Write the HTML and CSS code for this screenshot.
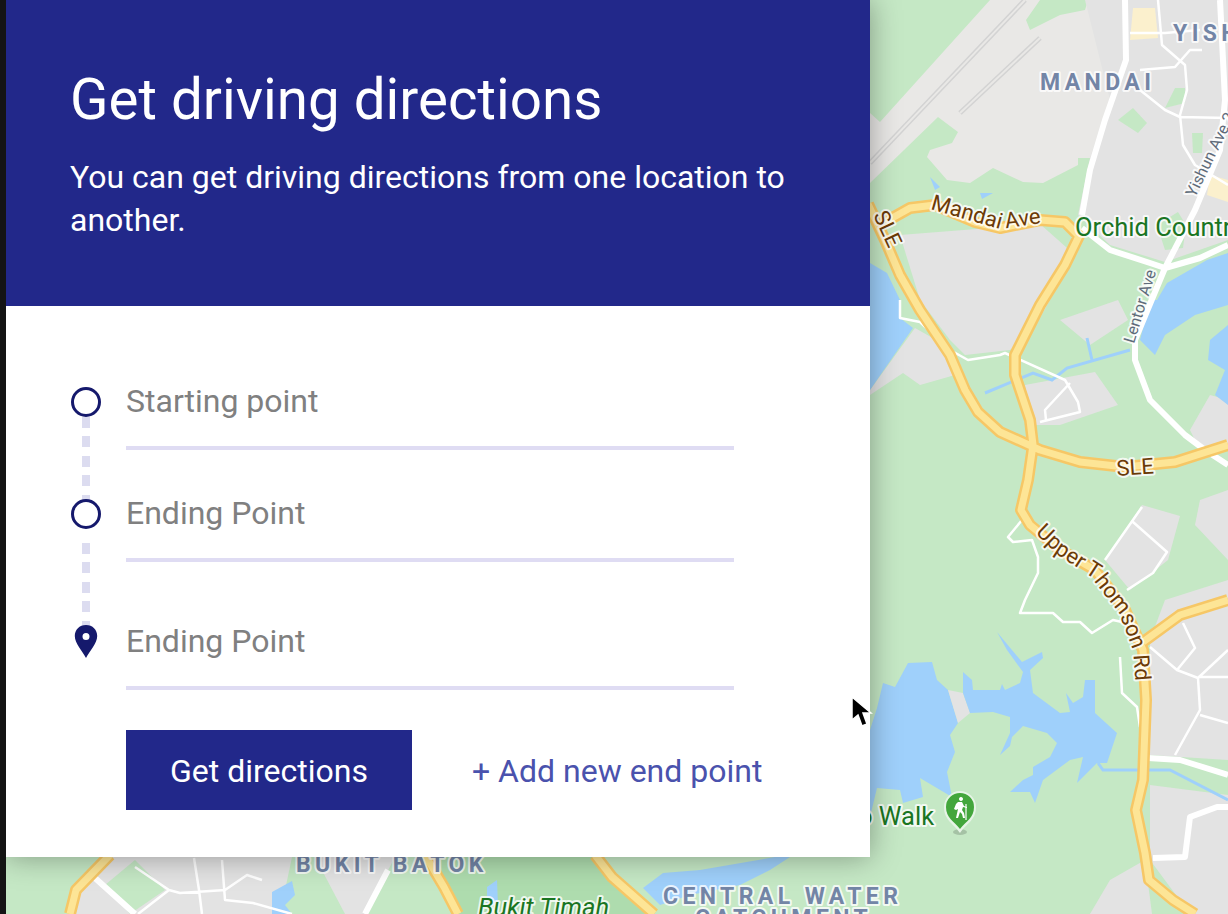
FILE: index.html
```html
<!DOCTYPE html>
<html lang="en">
<head>
<meta charset="utf-8">
<title>Get driving directions</title>
<link rel="stylesheet" href="styles.css">
</head>
<body>
<div class="stage">
  <div class="edge"></div>
  <div class="canvas">
    <svg class="map" viewBox="6 0 1222 914" width="1222" height="914" aria-hidden="true">
      <defs>
        <path id="major" d="M868 204L885 240L900 275L920 310L950 355L965 390L978 412L1000 432L1040 450L1080 462L1125 467L1175 462L1228 445M885 222L910 208L935 205L975 222L1000 228L1040 220L1065 222L1079 236L1065 265L1040 305L1015 355L1015 375L1030 420L1033 445L1028 480L1021 510L1030 525L1060 550L1095 570L1125 610L1143 650L1146 700L1143 780L1136 810L1145 853L1149 880L1173 900L1195 914M1143 642L1180 615L1228 600M110 855L76 890L70 914M425 855L444 887L458 914M595 855L612 877L654 914"/>
        <path id="mandai-label" d="M930 209L975 222L1000 229L1050 222"/>
        <path id="thomson-label" d="M1035 533L1058 555L1090 576L1119 613L1133 650L1136 690"/>
      </defs>
      <rect class="land" x="6" y="0" width="1222" height="914"/>
      <polygon class="airport" points="870,113 880,122 990,0 1228,0 1228,158 1078,158 1078,165 1043,183 1023,182 993,168 970,183 947,180 927,157 930,150 952,143 958,132 938,117 870,183"/>
      <polygon class="land" points="1040,0 1088,0 1085,10 1060,15 1030,30 1026,20"/>
      <polygon class="urban" points="1085,0 1228,0 1228,240 1165,262 1110,245 1078,215 1090,158 1110,100"/>
      <polygon class="land" points="1118,120 1133,108 1147,123 1138,133"/>
      <polygon class="land" points="1165,108 1175,88 1185,88 1185,103"/>
      <polygon class="land" points="1192,133 1203,133 1202,153 1193,153"/>
      <polygon class="land" points="1157,225 1178,212 1186,225 1183,248 1165,250"/>
      <polygon class="sand" points="1133,8 1155,8 1158,38 1130,40"/>
      <polygon class="sand" points="1210,175 1228,180 1228,202 1207,195"/>
      <polygon class="urban" points="900,235 1040,224 1075,255 1050,300 1030,335 1010,350 965,355 950,340 920,300"/>
      <polygon class="urban" points="870,395 903,373 920,385 955,375 945,345 915,328 870,390"/>
      <polygon class="urban" points="1025,385 1095,372 1118,405 1060,425 1030,425"/>
      <polygon class="urban" points="1090,345 1128,320 1118,300 1060,320"/>
      <polygon class="urban" points="1228,400 1210,395 1190,430 1200,450 1228,445"/>
      <polygon class="urban" points="1200,500 1228,490 1228,560 1195,525"/>
      <polygon class="urban" points="1142,505 1180,516 1168,560 1130,590 1105,560"/>
      <polygon class="urban" points="1150,640 1165,600 1228,580 1228,760 1150,755"/>
      <polygon class="urban" points="1150,785 1228,795 1228,914 1190,914 1150,860"/>
      <polygon class="urban" points="1090,914 1110,880 1145,860 1152,914"/>
      <polygon class="urban" points="100,857 292,857 280,914 70,914"/>
      <polygon class="land" points="135,860 165,890 130,914 105,885"/>
      <polygon class="urban" points="315,857 395,857 365,914 345,914"/>
      <polygon class="forest" points="432,857 595,857 654,914 458,914"/>
      <polygon class="water" points="870,263 887,273 900,300 900,318 913,328 870,390"/>
      <polygon class="water" points="1150,300 1228,300 1228,305 1195,315 1165,335 1155,355 1140,340"/>
      <polygon class="water" points="1157,300 1167,283 1207,260 1228,253 1228,305 1150,305"/>
      <polygon class="water" points="1210,340 1228,325 1228,405 1215,395 1225,370 1208,360"/>
      <polygon class="water" points="870,730 877,708 883,683 895,687 908,663 932,662 937,680 948,690 958,723 950,735 955,752 947,772 952,797 920,778 923,797 903,803 900,790 877,788 870,817"/>
      <polygon class="urban" points="948,690 963,693 970,713 958,723"/>
      <polygon class="water" points="963,672 972,680 973,690 1000,690 1002,684 1005,690 1020,683 1023,672 1007,650 997,632 1022,662 1042,652 1043,658 1030,670 1033,693 1060,713 1070,712 1066,693 1073,703 1083,697 1085,680 1095,680 1095,713 1117,733 1107,763 1097,763 1077,783 1083,757 1070,760 1043,780 1035,803 1030,792 1010,792 1023,780 1033,775 1033,767 1050,757 1057,743 1047,733 1023,726 1012,737 1010,746 1000,755 1010,733 1010,717 993,712 970,713 963,693"/>
      <polygon class="water" points="930,177 940,187 935,190"/>
      <polygon class="water" points="980,193 993,193 982,199"/>
      <polygon class="water" points="663,873 700,870 775,857 790,857 770,870 740,885 690,895 660,905 643,888"/>
      <polygon class="water" points="272,892 292,881 295,895 285,905 292,914 272,914"/>
      <polygon class="water" points="487,887 497,880 498,905 487,905"/>
      <path class="stream" d="M985 393L1033 373L1052 380L1067 368L1130 350M1087 338L1092 360M1098 763L1103 770L1170 770L1228 800"/>
      <path class="runway-edge" d="M870 163L1025 0M960 113L1040 38"/>
      <path class="runway" d="M870 163L1025 0M960 113L1040 38"/>
      <path class="road-thick" d="M1125 0L1126 60L1105 120L1090 170L1082 215M1082 228L1110 250L1150 263L1165 268L1200 258L1228 245M1220 0L1225 100L1220 150L1195 210L1165 268L1135 340L1135 360L1150 400L1185 435L1205 450L1228 465M1148 758L1180 760L1228 775M1153 858L1185 857L1190 817L1217 807L1228 807M95 878L135 914M388 870L365 914"/>
      <path class="road-thin" d="M1158 0L1162 45L1185 65L1187 90L1180 115L1183 145L1195 165L1228 185M1130 33L1165 33L1200 30M1140 70L1175 67L1190 50L1202 50M1140 90L1165 110L1180 117L1228 118M900 300L900 318L920 322L950 350L968 360L1000 355L1005 353L1065 380L1078 402L1080 412L1040 422M1070 383L1045 410L1046 420M1022 520L1008 537L1013 542L1032 540L1038 557L1038 573L1025 600L1020 613L1053 613L1063 622L1080 622L1092 633L1113 620L1122 622M1142 507L1105 560M1133 522L1167 552L1153 573L1127 590M1120 657L1122 693L1137 707L1140 727M1150 647L1177 670L1198 678L1200 710L1175 755M1183 623L1195 648L1177 670M1198 678L1228 650M1198 677L1228 677M1200 715L1228 723M135 867L169 890L138 914M169 890L180 893L225 890L247 875L262 880M194 858L199 890L202 914M222 860L225 900L253 903L292 914"/>
      <use href="#major" class="road-casing"/>
      <use href="#major" class="road-fill"/>
      <text class="label area" x="1040" y="90">MANDAI</text>
      <text class="label area" x="1173" y="41">YISHUN</text>
      <text class="label area" x="296" y="872">BUKIT BATOK</text>
      <text class="label area" x="663" y="904">CENTRAL WATER</text>
      <text class="label area" x="695" y="926">CATCHMENT</text>
      <text class="label place" x="1075" y="236">Orchid Country</text>
      <text class="label place" x="858" y="825">o Walk</text>
      <text class="label place place-it" x="478" y="916">Bukit Timah</text>
      <text class="label highway"><textPath href="#mandai-label">Mandai Ave</textPath></text>
      <text class="label highway"><textPath href="#thomson-label">Upper Thomson Rd</textPath></text>
      <text class="label highway" x="1117" y="476" transform="rotate(-4 1117 476)">SLE</text>
      <text class="label highway" x="873" y="215" transform="rotate(65 873 215)">SLE</text>
      <text class="label street" x="1134" y="344" transform="rotate(-73 1134 344)">Lentor Ave</text>
      <text class="label street" x="1195" y="198" transform="rotate(-64 1195 198)">Yishun Ave 2</text>
      <ellipse class="pin-shadow" cx="960" cy="832" rx="7" ry="3"/>
      <path class="pin-halo" d="M960 833C953 823 944 820 944 807A16 16 0 0 1 976 807C976 820 967 823 960 833Z"/>
      <path class="pin-green" d="M960 829C954 821 946 818 946 807A14 14 0 0 1 974 807C974 818 966 821 960 829Z"/>
      <path class="pin-hiker" d="M961 797a2 2 0 1 1-.01 0ZM958 802h4l2 4 3 1v1l-4-1-1 3 2 3 1 5h-2l-1-4-2-2-2 6h-2l2-9-2 1-2-1 2-5Z"/>
      <path class="pin-stick" d="M966 804L966 820"/>
    </svg>

    <section class="panel">
      <header class="banner">
        <h1 class="title">Get driving directions</h1>
        <p class="lead">You can get driving directions from one location to another.</p>
      </header>
      <div class="form">
        <div class="stop">
          <div class="marker">
            <span class="ring"></span>
            <span class="link link-first"></span>
          </div>
          <div class="field">Starting point</div>
        </div>
        <div class="stop stop-second">
          <div class="marker">
            <span class="ring"></span>
            <span class="link link-second"></span>
          </div>
          <div class="field">Ending Point</div>
        </div>
        <div class="stop stop-last">
          <div class="marker">
            <svg class="pin" viewBox="0 0 24 34" width="24" height="34" aria-hidden="true">
              <path class="pin-body" fill-rule="evenodd" d="M12 0C5.4 0 .8 4.9.8 11c0 7.6 7.400 14.600 11.200 22 3.800-7.400 11.200-14.400 11.200-22C23.200 4.900 18.600 0 12 0Zm0 8a3.500 3.500 0 1 1 0 7 3.500 3.500 0 0 1 0-7Z"/>
            </svg>
          </div>
          <div class="field">Ending Point</div>
        </div>
        <div class="actions">
          <button class="primary" type="button">Get directions</button>
          <a class="add" href="#">+ Add new end point</a>
        </div>
      </div>
    </section>

    <svg class="cursor" viewBox="0 0 22 32" width="22" height="32" aria-hidden="true">
      <path class="cursor-arrow" d="M1 1V24L7 19L11 30L16 28L12 17H20Z"/>
    </svg>
  </div>
</div>
</body>
</html>
```

FILE: styles.css
```css
* { box-sizing: border-box; }

html, body {
  margin: 0;
  height: 100%;
}

body {
  overflow: hidden;
  font-family: Roboto, "Liberation Sans", sans-serif;
  background: #111;
}

.stage {
  display: flex;
  width: 1228px;
  height: 914px;
}

.edge {
  flex: 0 0 6px;
  background: #141414;
}

.canvas {
  position: relative;
  flex: 1;
  overflow: hidden;
}

.map {
  position: absolute;
  inset: 0;
  display: block;
}

.land { fill: #c5e8c5; }
.forest { fill: #aedcae; }
.airport { fill: #e9e8e6; }
.urban { fill: #e3e3e3; }
.sand { fill: #fbf0cd; }
.water { fill: #9fd0fb; }

.stream { fill: none; stroke: #9fd0fb; stroke-width: 3; }
.runway-edge { fill: none; stroke: #d3d3d3; stroke-width: 5; }
.runway { fill: none; stroke: #e9e8e6; stroke-width: 2; }
.road-thick { fill: none; stroke: #fff; stroke-width: 6; stroke-linejoin: round; }
.road-thin { fill: none; stroke: #fff; stroke-width: 2.500; stroke-linejoin: round; }
.road-casing { fill: none; stroke: #f6c766; stroke-width: 12; stroke-linejoin: round; }
.road-fill { fill: none; stroke: #fde596; stroke-width: 7; stroke-linejoin: round; }

.label {
  paint-order: stroke;
  stroke: rgba(255, 255, 255, .8);
  stroke-width: 4px;
  stroke-linejoin: round;
  font-family: Roboto, "Liberation Sans", sans-serif;
}

.area {
  font-size: 23px;
  font-weight: 700;
  letter-spacing: 4.400px;
  fill: #7385a6;
}

.place { font-size: 25.500px; fill: #1a7522; }
.place-it { font-style: italic; font-size: 25.500px; }
.highway { font-size: 22px; fill: #6b3a06; }
.street { font-size: 16px; fill: #5f6b7a; }

.pin-shadow { fill: rgba(0, 0, 0, .16); }
.pin-halo { fill: #e6f4e6; }
.pin-green { fill: #43a63c; }
.pin-hiker { fill: #fff; }
.pin-stick { stroke: #fff; stroke-width: 1.200; }

.panel {
  position: relative;
  width: 864px;
  height: 857px;
  background: #fff;
  box-shadow: 0 0 28px rgba(0, 0, 0, .35);
}

.banner {
  height: 306px;
  padding: 69px 60px 0 64px;
  background: #22288a;
  color: #fff;
}

.title {
  margin: 0;
  font-size: 56.500px;
  font-weight: 400;
  line-height: 62px;
}

.lead {
  margin: 25px 0 0;
  font-size: 32px;
  font-weight: 400;
  line-height: 43px;
}

.form {
  padding: 76px 0 0 65px;
}

.stop {
  display: grid;
  grid-template-columns: 30px 608px;
  column-gap: 25px;
}

.stop-second { margin-top: 44px; }
.stop-last { margin-top: 60px; }

.marker {
  position: relative;
  height: 40px;
  display: flex;
  align-items: center;
  justify-content: center;
}

.ring {
  width: 30px;
  height: 30px;
  border: 3.500px solid #15196c;
  border-radius: 50%;
  background: #fff;
}

.link {
  position: absolute;
  left: 11px;
  width: 8px;
  background: repeating-linear-gradient(to bottom, #dcdcf0 0 11px, transparent 11px 19.500px);
}

.link-first { top: 35px; height: 83px; }
.link-second { top: 49px; height: 84px; }

.pin { display: block; }
.pin-body { fill: #15196c; }

.field {
  height: 68px;
  border-bottom: 4px solid #dfdcf3;
  font-size: 32px;
  line-height: 38px;
  color: #808080;
}

.actions {
  display: flex;
  align-items: center;
  gap: 60px;
  margin: 40px 0 0 55px;
}

.primary {
  width: 286px;
  height: 80px;
  padding: 2px 0 0;
  border: 0;
  background: #22288a;
  color: #fff;
  font-family: inherit;
  font-size: 32px;
}

.add {
  padding-top: 2px;
  font-size: 32px;
  color: #4a52ad;
  text-decoration: none;
}

.cursor {
  position: absolute;
  left: 845px;
  top: 696px;
}

.cursor-arrow {
  fill: #000;
  stroke: #fff;
  stroke-width: 1.500;
}
```
